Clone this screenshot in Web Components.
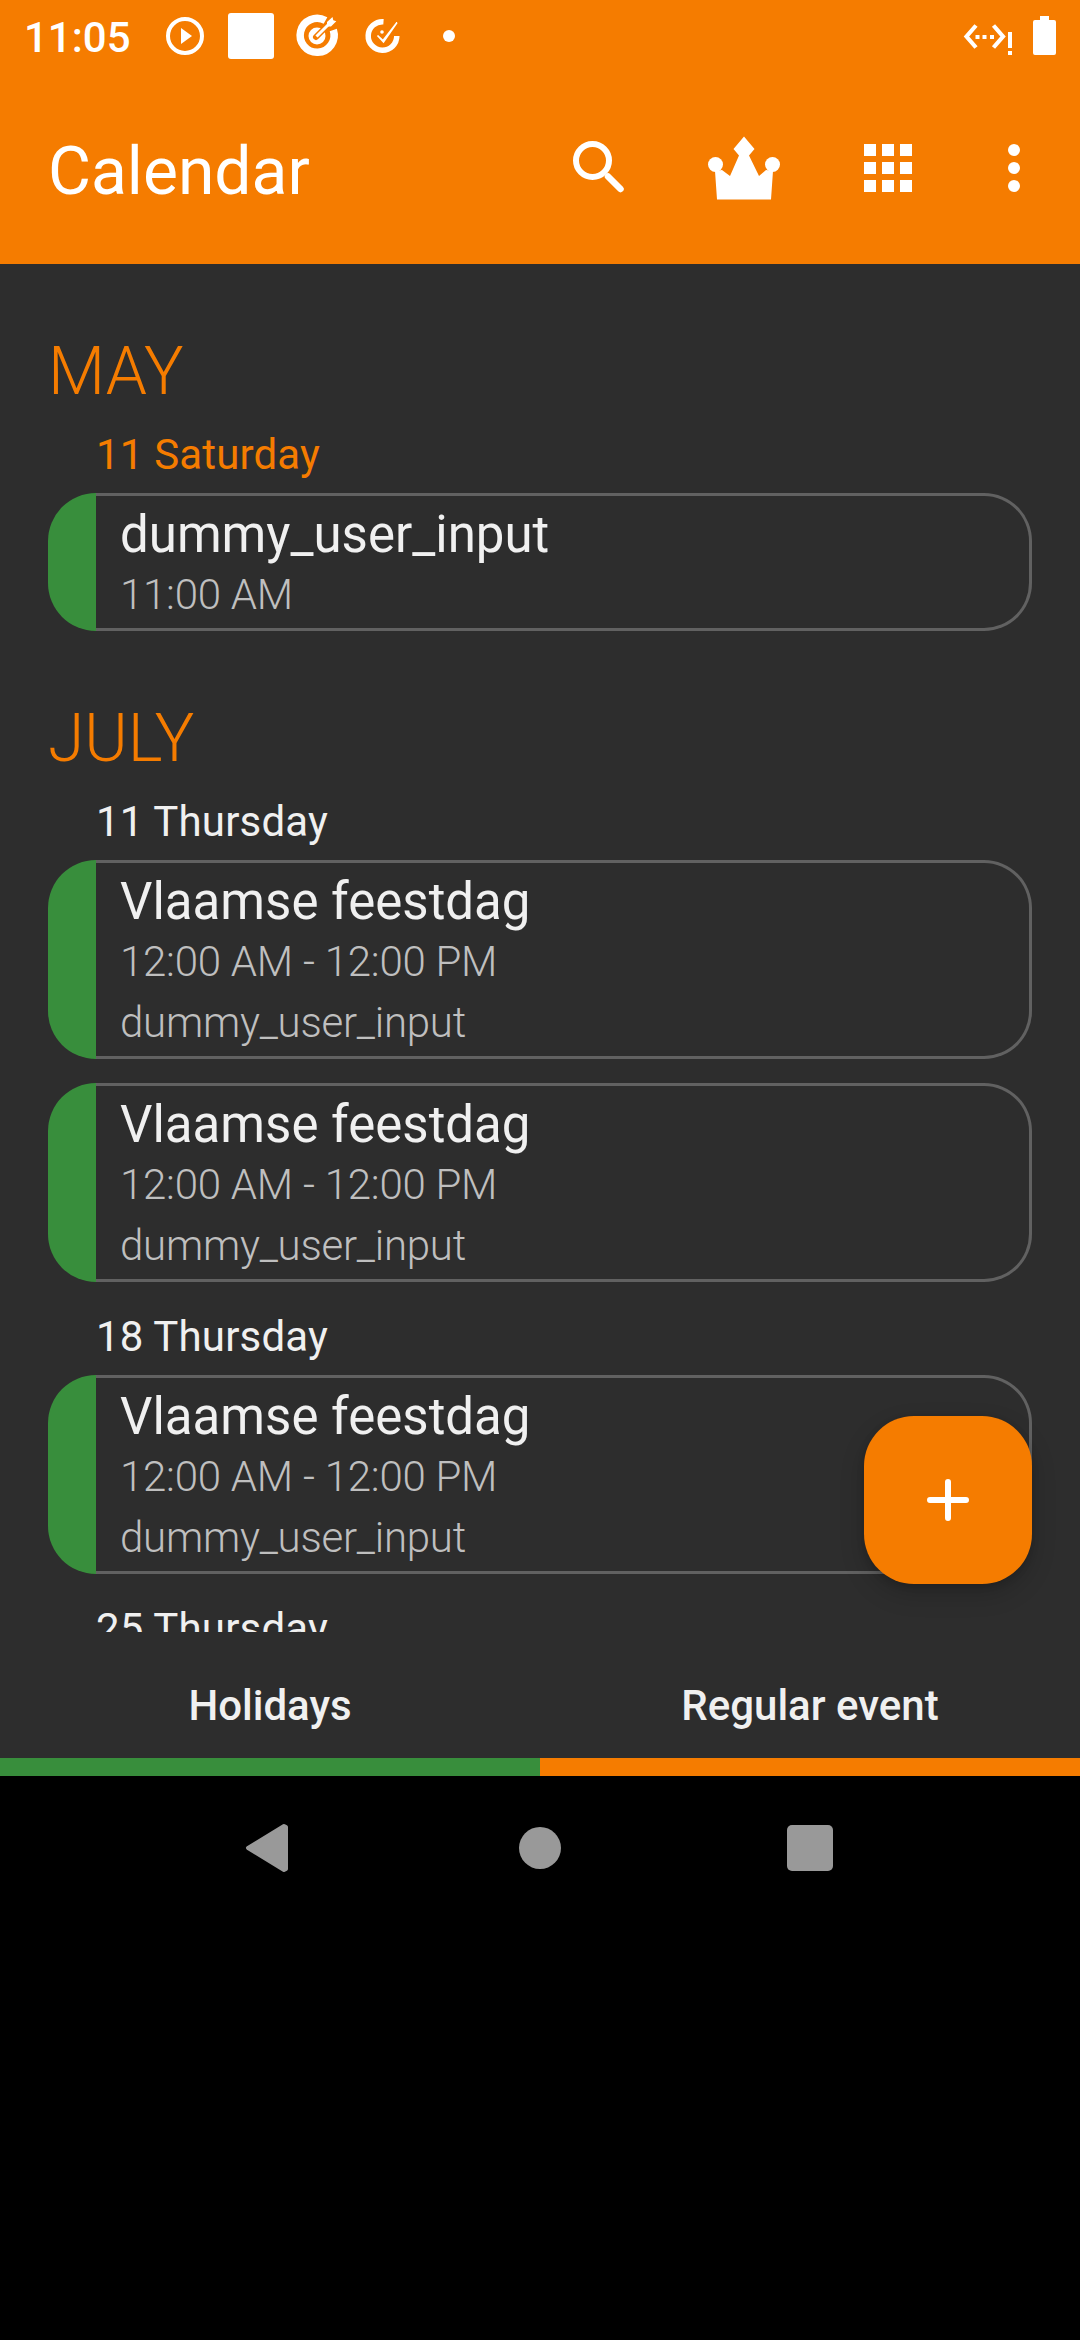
<!DOCTYPE html>
<html lang="en">
<head>
<meta charset="utf-8">
<title>Calendar</title>
<style>
html,body{margin:0;background:#000}
body{font-family:Roboto,"Liberation Sans",sans-serif;width:1080px;height:2340px;overflow:hidden}
</style>
</head>
<body>
<calendar-app></calendar-app>
<script>
const define = (name, html) => {
  const t = document.createElement('template');
  t.innerHTML = html;
  customElements.define(name, class extends HTMLElement {
    constructor() {
      super();
      this.attachShadow({mode: 'open'}).appendChild(t.content.cloneNode(true));
    }
  });
};

define('status-bar', `
<style>
:host{display:flex;height:72px;color:#fff;font-size:42px;font-weight:500;line-height:72px;padding-left:24px;box-sizing:border-box}
.clock{width:136px;flex:none;padding-top:2px}
svg{display:block;flex:none;fill:#fff}
.right{margin-left:auto}
</style>
<span class="clock">11:05</span>
<svg width="300" height="72" viewBox="160 0 300 72">
  <circle cx="185" cy="36" r="17" fill="none" stroke="#fff" stroke-width="4"/>
  <path d="M181 28v16l11-8z"/>
  <rect x="228" y="13" width="46" height="46" rx="3"/>
  <path d="M325.500 20.500A17 17 0 1 0 333.300 30" fill="none" stroke="#fff" stroke-width="7.500"/>
  <circle cx="317" cy="36" r="8.500"/>
  <path d="M316 37L331 22" stroke="#f57c00" stroke-width="6" stroke-linecap="round" fill="none"/>
  <path d="M316.500 36.500L331 22" stroke="#fff" stroke-width="3" fill="none"/>
  <path d="M327 22l5.500-5 .800 3.200 3 1-5.300 5.300h-4z"/>
  <path d="M383.500 21.700A14.300 14.300 0 1 0 396.800 36" fill="none" stroke="#fff" stroke-width="5.500"/>
  <path d="M377.500 35.500l5.500 5 14-18-13.500 19.500z" stroke="#fff" stroke-width="1.600"/>
  <circle cx="382" cy="32" r="1.800"/>
  <circle cx="449" cy="36" r="6"/>
</svg>
<svg class="right" width="130" height="72" viewBox="950 0 130 72">
  <path d="M976 25.500l-9.500 11 9.500 11M993.500 25.500l9.500 11-9.500 11" fill="none" stroke="#fff" stroke-width="4.200"/>
  <path d="M975.500 35h4v4h-4zM982.500 35h4v4h-4zM990 35h4v4h-4zM1008 32h4v16h-4zM1008 51h4v4h-4z"/>
  <path d="M1040 16h9v4h5q2 0 2 2v31q0 2-2 2h-19q-2 0-2-2v-31q0-2 2-2h5z"/>
</svg>`);

define('tool-bar', `
<style>
:host{display:flex;height:192px;color:#fff;padding-left:48px;box-sizing:border-box}
h1{margin:0;font-size:66px;font-weight:400;line-height:78px;padding-top:61px}
svg{display:block;margin-left:auto;fill:#fff}
</style>
<h1><slot></slot></h1>
<svg width="540" height="192" viewBox="540 72 540 192">
  <circle cx="592.500" cy="160.500" r="16.500" fill="none" stroke="#fff" stroke-width="6"/>
  <path d="M608 176.500l12.500 12.500" stroke="#fff" stroke-width="6.500" stroke-linecap="round"/>
  <path d="M744 136.500L754.500 149 749 155.500 759 176 766 170 773 171 771 199.500H717L715 171 722 170 730 176 739 155.500 733.500 149z"/>
  <circle cx="715.500" cy="164.500" r="7.500"/><circle cx="772.500" cy="164.500" r="7.500"/>
  <path d="M864 144h12v12h-12zM882 144h12v12h-12zM900 144h12v12h-12zM864 162h12v12h-12zM882 162h12v12h-12zM900 162h12v12h-12zM864 180h12v12h-12zM882 180h12v12h-12zM900 180h12v12h-12z"/>
  <circle cx="1014" cy="150" r="6"/><circle cx="1014" cy="168" r="6"/><circle cx="1014" cy="186" r="6"/>
</svg>`);

define('month-title', `
<style>:host{display:block;height:158px;padding:69px 0 0 48px;box-sizing:border-box;font-size:66px;font-weight:300;line-height:78px;color:#f57c00}</style><slot></slot>`);

define('day-title', `
<style>:host{display:block;height:71px;padding:8px 0 0 96px;box-sizing:border-box;font-size:42px;line-height:50px;letter-spacing:.17px;color:#f0f0f0}
:host([today]){color:#f57c00}</style><slot></slot>`);

define('event-card', `
<style>
:host{display:flex;margin:0 48px 22px;height:199px;color:#bfbfbf;font-size:42px;font-weight:300}
:host([short]){height:138px}
.bar{width:48px;flex:none;background:#388e3c;border-radius:48px 0 0 48px}
.text{flex:1;box-sizing:border-box;border:3px solid #616161;border-left:0;border-radius:0 48px 48px 0;padding:9px 0 0 24px;display:flex;flex-direction:column}
.title{color:#f0f0f0;font-size:51px;font-weight:400;line-height:60px;height:60px;flex:none}
.line,.note{line-height:50px;height:50px;letter-spacing:-.24px;flex:none}
.line{padding-top:5px}
.note{padding-top:11px}
:host([short]) .note{display:none}
</style>
<div class="bar"></div>
<div class="text">
<div class="title"><slot></slot></div>
<div class="line"><slot name="time"></slot></div>
<div class="note"><slot name="note"></slot></div>
</div>`);

define('add-button', `
<style>
:host{position:absolute;left:864px;top:1416px;width:168px;height:168px;border-radius:50px;background:#f57c00;display:flex;align-items:center;justify-content:center;box-shadow:0 10px 24px rgba(0,0,0,.18),0 2px 7px rgba(0,0,0,.15)}
</style>
<svg width="42" height="42" viewBox="0 0 42 42"><path d="M21 3v36M3 21h36" stroke="#fff" stroke-width="6" stroke-linecap="round"/></svg>`);

define('type-tab', `
<style>
:host{flex:1;display:flex;flex-direction:column;justify-content:flex-end;text-align:center;font-size:42px;font-weight:500;line-height:50px;color:#f0f0f0}
.strip{height:18px;margin-top:27px;background:var(--strip)}
</style>
<span><slot></slot></span><div class="strip"></div>`);

define('nav-bar', `
<style>
:host{display:flex;height:144px;justify-content:center}
svg{display:block;fill:#999}
</style>
<svg width="1080" height="144" viewBox="0 1776 1080 144">
  <path d="M284 1826L248 1848l36 22 2-1v-42z" stroke="#999" stroke-width="4" stroke-linejoin="round"/>
  <circle cx="540" cy="1848" r="21"/>
  <rect x="787" y="1825" width="46" height="46" rx="5"/>
</svg>`);

define('calendar-app', `
<style>
:host{display:flex;flex-direction:column;width:1080px;height:2340px;background:#000;position:relative}
header{background:#f57c00;height:264px}
main{background:#2d2d2d;height:1368px;overflow:hidden}
footer{background:#2d2d2d;height:144px;display:flex}
</style>
<header><status-bar></status-bar><tool-bar>Calendar</tool-bar></header>
<main>
<month-title>MAY</month-title>
<day-title today>11 Saturday</day-title>
<event-card short>dummy_user_input<span slot="time">11:00 AM</span></event-card>
<month-title style="margin-top:-22px">JULY</month-title>
<day-title>11 Thursday</day-title>
<event-card style="margin-bottom:24px">Vlaamse feestdag<span slot="time">12:00 AM - 12:00 PM</span><span slot="note">dummy_user_input</span></event-card>
<event-card>Vlaamse feestdag<span slot="time">12:00 AM - 12:00 PM</span><span slot="note">dummy_user_input</span></event-card>
<day-title>18 Thursday</day-title>
<event-card>Vlaamse feestdag<span slot="time">12:00 AM - 12:00 PM</span><span slot="note">dummy_user_input</span></event-card>
<day-title>25 Thursday</day-title>
</main>
<footer><type-tab style="--strip:#388e3c">Holidays</type-tab><type-tab style="--strip:#f57c00">Regular event</type-tab></footer>
<nav-bar></nav-bar>
<add-button></add-button>`);
</script>
</body>
</html>
